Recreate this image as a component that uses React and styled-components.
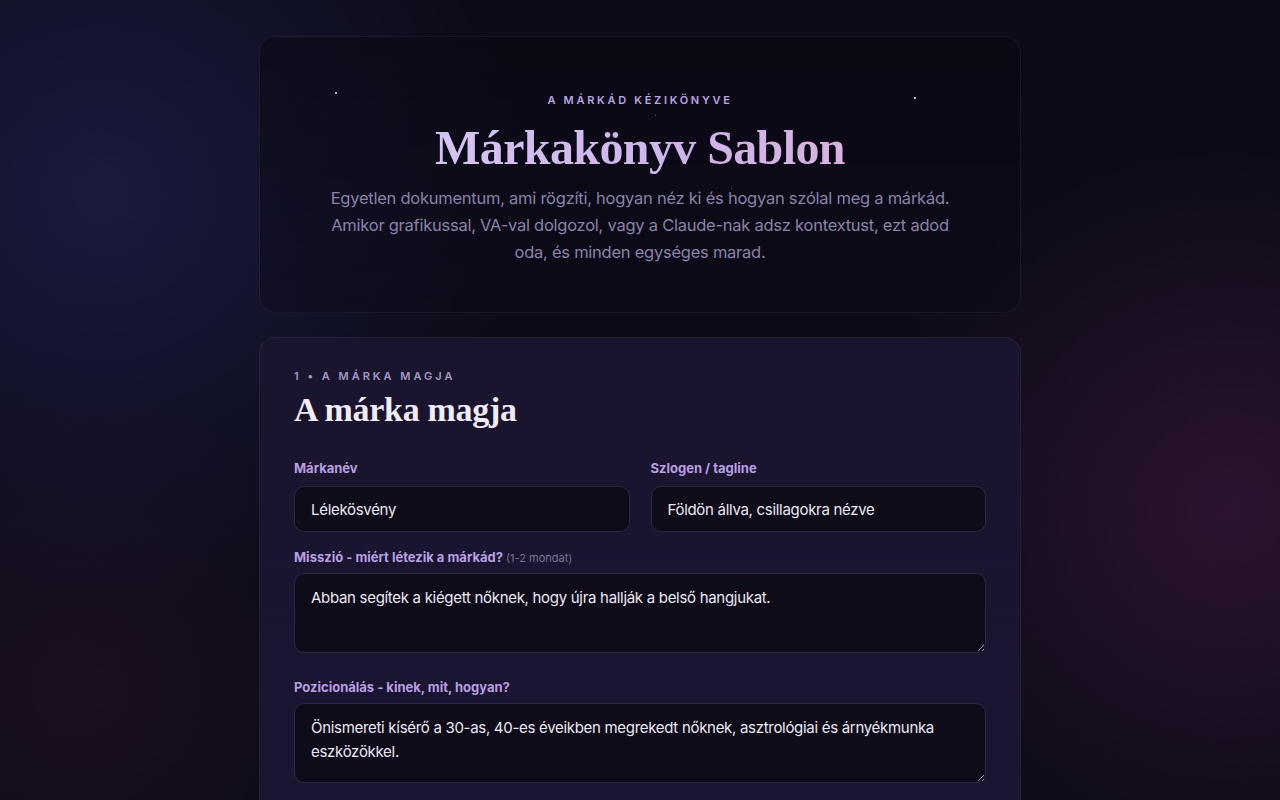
import styled, { createGlobalStyle } from 'styled-components';

const GlobalStyle = createGlobalStyle`
  * { box-sizing: border-box; }
  html, body { margin: 0; padding: 0; }
  body {
    background-color: #0c0b17;
    background-image:
      radial-gradient(circle at 8% 22%, rgba(42, 46, 110, 0.45) 0, rgba(42, 46, 110, 0) 420px),
      radial-gradient(circle at 96% 58%, rgba(96, 34, 88, 0.38) 0, rgba(96, 34, 88, 0) 380px),
      radial-gradient(circle at 6% 78%, rgba(70, 26, 62, 0.28) 0, rgba(70, 26, 62, 0) 300px);
    min-height: 100vh;
    font-family: "Inter", "Liberation Sans", sans-serif;
    color: #ece8f4;
  }
`;

const Page = styled.main`
  width: 762px;
  margin: 0 auto;
  padding: 36px 0 40px;
  display: flex;
  flex-direction: column;
  gap: 24px;
`;

const Hero = styled.header`
  position: relative;
  border: 1px solid rgba(255, 255, 255, 0.055);
  border-radius: 16px;
  background: linear-gradient(180deg, rgba(10, 9, 20, 0.55), rgba(12, 10, 24, 0.35));
  padding: 56px 40px 46px;
  text-align: center;
  overflow: hidden;
`;

const Star = styled.span`
  position: absolute;
  width: ${p => p.$size || 1.5}px;
  height: ${p => p.$size || 1.5}px;
  border-radius: 50%;
  background: #e8e4ff;
  opacity: ${p => p.$dim ? 0.5 : 0.9};
`;

const Eyebrow = styled.div`
  font-size: 11px;
  font-weight: 600;
  line-height: 14px;
  letter-spacing: ${p => p.$muted ? 3 : 2.7}px;
  text-transform: uppercase;
  color: ${p => p.$muted ? '#a39ac4' : '#b8a6e2'};
`;

const HeroTitle = styled.h1`
  margin: 12px 0 8px;
  font-family: "Liberation Serif", "DejaVu Serif", serif;
  font-size: 48px;
  font-weight: 700;
  line-height: 58px;
  letter-spacing: -0.6px;
  background: linear-gradient(90deg, #d9cdf6 0%, #cdb4ea 55%, #e2b2d6 100%);
  -webkit-background-clip: text;
  background-clip: text;
  color: transparent;
`;

const Lead = styled.p`
  margin: 0 auto;
  max-width: 640px;
  font-size: 16.5px;
  line-height: 27px;
  letter-spacing: -0.25px;
  color: #8a82a8;
`;

const Section = styled.section`
  border: 1px solid rgba(255, 255, 255, 0.05);
  border-radius: 16px;
  background: linear-gradient(180deg, #19152f 0%, #1a1530 100%);
  padding: 31px 34px 40px;
  display: flex;
  flex-direction: column;
`;

const SectionTitle = styled.h2`
  margin: 6px 0 30px;
  font-family: "Liberation Serif", "DejaVu Serif", serif;
  font-size: 34px;
  font-weight: 700;
  letter-spacing: -0.3px;
  line-height: 41px;
  color: #f1ecf8;
`;

const Row = styled.div`
  display: grid;
  grid-template-columns: 1fr 1fr;
  gap: 21px;
`;

const Field = styled.label`
  display: flex;
  flex-direction: column;
  margin-bottom: ${p => p.$gap || 17}px;
`;

const Label = styled.span`
  font-size: 13px;
  font-weight: 700;
  line-height: 16px;
  color: #b99fe2;
  margin-bottom: ${p => p.$mb ?? 10}px;
`;

const Hint = styled.span`
  font-size: 11px;
  font-weight: 400;
  line-height: 16px;
  color: #7a7294;
`;

const inputBase = `
  width: 100%;
  font-family: "Inter", "Liberation Sans", sans-serif;
  font-size: 15px;
  letter-spacing: -0.3px;
  color: #ece8f4;
  background: #0e0c19;
  border: 1px solid #2b2744;
  border-radius: 10px;
  outline: none;
`;

const Input = styled.input`
  ${inputBase}
  height: 46px;
  padding: 0 16px;
`;

const TextArea = styled.textarea`
  ${inputBase}
  display: block;
  height: 80px;
  padding: 12px 16px;
  line-height: 24px;
  resize: vertical;
`;

export default function App() {
  return (
    <>
      <GlobalStyle />
      <Page>
        <Hero>
          <Star style={{ left: 75, top: 55 }} />
          <Star style={{ left: 654, top: 60 }} />
          <Star style={{ left: 395, top: 78 }} $size={1} $dim />
          <Star style={{ left: 471, top: 151 }} $size={1} $dim />
          <Eyebrow>A márkád kézikönyve</Eyebrow>
          <HeroTitle>Márkakönyv Sablon</HeroTitle>
          <Lead>
            Egyetlen dokumentum, ami rögzíti, hogyan néz ki és hogyan szólal meg a márkád.
            Amikor grafikussal, VA-val dolgozol, vagy a Claude-nak adsz kontextust, ezt adod
            oda, és minden egységes marad.
          </Lead>
        </Hero>

        <Section>
          <Eyebrow $muted>1 • A márka magja</Eyebrow>
          <SectionTitle>A márka magja</SectionTitle>
          <Row>
            <Field $gap={17}>
              <Label>Márkanév</Label>
              <Input defaultValue="Lélekösvény" />
            </Field>
            <Field $gap={17}>
              <Label>Szlogen / tagline</Label>
              <Input defaultValue="Földön állva, csillagokra nézve" />
            </Field>
          </Row>
          <Field $gap={26}>
            <Label $mb={7}>Misszió - miért létezik a márkád? <Hint>(1-2 mondat)</Hint></Label>
            <TextArea defaultValue="Abban segítek a kiégett nőknek, hogy újra hallják a belső hangjukat." />
          </Field>
          <Field>
            <Label $mb={8}>Pozicionálás - kinek, mit, hogyan?</Label>
            <TextArea defaultValue="Önismereti kísérő a 30-as, 40-es éveikben megrekedt nőknek, asztrológiai és árnyékmunka eszközökkel." />
          </Field>
        </Section>
      </Page>
    </>
  );
}
